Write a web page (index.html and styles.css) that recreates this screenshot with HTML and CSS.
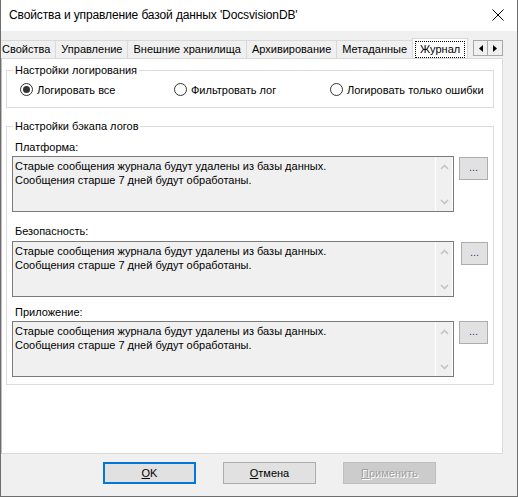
FILE: index.html
```html
<!DOCTYPE html>
<html lang="ru">
<head>
<meta charset="utf-8">
<title>Свойства и управление базой данных</title>
<link rel="stylesheet" href="styles.css">
</head>
<body>
<div class="window">
  <header class="titlebar">
    <span class="title">Свойства и управление базой данных 'DocsvisionDB'</span>
    <svg class="close" width="12" height="12" viewBox="0 0 12 12"><path d="M0.5 0.5 L11.5 11.5 M11.5 0.5 L0.5 11.5" stroke="#000" stroke-width="1" fill="none"/></svg>
  </header>
  <div class="dialog">
    <div class="tabstrip">
      <div class="tabs">
        <div class="tab">Свойства</div>
        <div class="tab">Управление</div>
        <div class="tab">Внешние хранилища</div>
        <div class="tab">Архивирование</div>
        <div class="tab">Метаданные</div>
        <div class="tab tab-active"><span class="focus">Журнал</span></div>
      </div>
      <div class="tab-scroll">
        <span class="arrow-btn"><svg width="4" height="7" viewBox="0 0 4 7"><path d="M4 0 L0 3.5 L4 7 Z" fill="#000"/></svg></span>
        <span class="arrow-btn"><svg width="4" height="7" viewBox="0 0 4 7"><path d="M0 0 L4 3.5 L0 7 Z" fill="#000"/></svg></span>
      </div>
    </div>
    <div class="panel">
      <fieldset class="group group-log">
        <legend>Настройки логирования</legend>
        <div class="radios">
          <label class="radio"><span class="radio-mark radio-checked"></span>Логировать все</label>
          <label class="radio"><span class="radio-mark"></span>Фильтровать лог</label>
          <label class="radio"><span class="radio-mark"></span>Логировать только ошибки</label>
        </div>
      </fieldset>
      <fieldset class="group group-backup">
        <legend>Настройки бэкапа логов</legend>
        <div class="field field-platform">
          <div class="field-label">Платформа:</div>
          <div class="field-row">
            <div class="memo">
              <div class="memo-text">Старые сообщения журнала будут удалены из базы данных.<br>Сообщения старше 7 дней будут обработаны.</div>
              <div class="memo-scroll">
                <svg width="9" height="6" viewBox="0 0 9 6"><path d="M1 5 L4.5 1.5 L8 5" stroke="#c4c4c4" stroke-width="1.6" fill="none"/></svg>
                <svg width="9" height="6" viewBox="0 0 9 6"><path d="M1 1 L4.5 4.5 L8 1" stroke="#c4c4c4" stroke-width="1.6" fill="none"/></svg>
              </div>
            </div>
            <button class="btn-more">...</button>
          </div>
        </div>
        <div class="field field-security">
          <div class="field-label">Безопасность:</div>
          <div class="field-row">
            <div class="memo">
              <div class="memo-text">Старые сообщения журнала будут удалены из базы данных.<br>Сообщения старше 7 дней будут обработаны.</div>
              <div class="memo-scroll">
                <svg width="9" height="6" viewBox="0 0 9 6"><path d="M1 5 L4.5 1.5 L8 5" stroke="#c4c4c4" stroke-width="1.6" fill="none"/></svg>
                <svg width="9" height="6" viewBox="0 0 9 6"><path d="M1 1 L4.5 4.5 L8 1" stroke="#c4c4c4" stroke-width="1.6" fill="none"/></svg>
              </div>
            </div>
            <button class="btn-more btn-more-wide-gap">...</button>
          </div>
        </div>
        <div class="field field-app">
          <div class="field-label">Приложение:</div>
          <div class="field-row">
            <div class="memo">
              <div class="memo-text">Старые сообщения журнала будут удалены из базы данных.<br>Сообщения старше 7 дней будут обработаны.</div>
              <div class="memo-scroll">
                <svg width="9" height="6" viewBox="0 0 9 6"><path d="M1 5 L4.5 1.5 L8 5" stroke="#c4c4c4" stroke-width="1.6" fill="none"/></svg>
                <svg width="9" height="6" viewBox="0 0 9 6"><path d="M1 1 L4.5 4.5 L8 1" stroke="#c4c4c4" stroke-width="1.6" fill="none"/></svg>
              </div>
            </div>
            <button class="btn-more btn-more-flush">...</button>
          </div>
        </div>
      </fieldset>
    </div>
    <footer class="footer">
      <button class="btn btn-default"><u>O</u>K</button>
      <button class="btn"><u>О</u>тмена</button>
      <button class="btn btn-disabled"><u>П</u>рименить</button>
    </footer>
  </div>
</div>
</body>
</html>
```
FILE: styles.css
```css
* { box-sizing: border-box; }

html, body {
  margin: 0;
  padding: 0;
  background: #ffffff;
}

body {
  font-family: "Liberation Sans", Arial, sans-serif;
  font-size: 11px;
  color: #000;
}

.window {
  width: 518px;
  height: 497px;
  display: flex;
  flex-direction: column;
  border-left: 1px solid #6e6e6e;
  border-right: 1px solid #6e6e6e;
  border-bottom: 1px solid #6e6e6e;
  background: #f0f0f0;
}

.titlebar {
  height: 31px;
  flex: none;
  display: flex;
  align-items: center;
  justify-content: space-between;
  padding: 0 13px 1px 8px;
  background: #ffffff;
}

.title {
  font-size: 12px;
  letter-spacing: -0.12px;
  color: #000;
}

.close {
  display: block;
}

.dialog {
  flex: 1;
  display: flex;
  flex-direction: column;
  background: #f0f0f0;
}

/* tabs */
.tabstrip {
  height: 27px;
  flex: none;
  display: flex;
  align-items: flex-end;
  overflow: hidden;
  padding-right: 14px;
}

.tabs {
  display: flex;
  align-items: flex-end;
  margin-left: -5px;
}

.tab {
  height: 18px;
  padding: 0 5px;
  border: 1px solid #d9d9d9;
  border-bottom: none;
  margin-right: -1px;
  line-height: 16px;
  white-space: nowrap;
  background: #f0f0f0;
}

.tab-active {
  height: 21px;
  background: #ffffff;
  margin-bottom: -1px;
  padding: 2px 2px 0 2px;
  position: relative;
  z-index: 1;
}

.focus {
  display: block;
  height: 17px;
  line-height: 15px;
  padding: 0 4px;
  border: 1px dotted #000;
}

.tab-scroll {
  margin-left: auto;
  margin-bottom: 2px;
  display: flex;
}

.arrow-btn {
  width: 15px;
  height: 16px;
  border: 1px solid #a8a8a8;
  background: #f0f0f0;
  display: flex;
  align-items: center;
  justify-content: center;
}

.arrow-btn + .arrow-btn {
  border-left: none;
  width: 15px;
}

/* panel */
.panel {
  height: 396px;
  flex: none;
  margin-right: 14px;
  background: #ffffff;
  border: 1px solid #d9d9d9;
  border-left: 1px solid #bdbdbd;
  padding: 0 8px 0 4px;
}

.group {
  margin: 0;
  min-width: 0;
  border: 1px solid #dcdcdc;
  padding: 0 5px;
}

.group legend {
  padding: 0 2px;
  margin-left: 1px;
  line-height: 14px;
}

.group-log {
  margin-top: 4px;
  padding-top: 5px;
  padding-bottom: 10px;
}

.radios {
  display: grid;
  grid-template-columns: 154px 156px auto;
  padding-left: 8px;
  height: 15px;
}

.radio {
  display: flex;
  align-items: center;
  gap: 4px;
  white-space: nowrap;
}

.radio-mark {
  width: 13px;
  height: 13px;
  border: 1px solid #333333;
  border-radius: 50%;
  background: #ffffff;
  display: flex;
  align-items: center;
  justify-content: center;
  flex: none;
}

.radio-checked::after {
  content: "";
  width: 7px;
  height: 7px;
  border-radius: 50%;
  background: #333333;
}

.group-backup {
  margin-top: 11px;
  padding-top: 7px;
  padding-bottom: 7px;
}

.field-label {
  line-height: 14px;
  height: 14px;
  padding-left: 3px;
}

.field-platform .field-row { margin-top: 2px; }
.field-security { margin-top: 12px; }
.field-security .field-row { margin-top: 3px; }
.field-app { margin-top: 8px; }
.field-app .field-row { margin-top: 2px; }

.field-row {
  display: flex;
  align-items: flex-start;
}

.memo {
  width: 442px;
  height: 56px;
  border: 1px solid #7a7a7a;
  background: #f0f0f0;
  display: flex;
  flex: none;
}

.memo-text {
  flex: 1;
  padding: 2px 2px;
  line-height: 14px;
  white-space: nowrap;
  overflow: hidden;
}

.memo-scroll {
  width: 18px;
  border-left: 1px solid #ffffff;
  border-right: 1px solid #ffffff;
  display: flex;
  flex-direction: column;
  align-items: center;
  justify-content: space-between;
  padding: 7px 0 6px;
}

.memo-scroll svg { display: block; }

.btn-more {
  width: 29px;
  height: 23px;
  margin-left: 5px;
  margin-top: 1px;
  padding: 0 0 3px;
  border: 1px solid #adadad;
  background: #e1e1e1;
  font-family: "Liberation Sans", Arial, sans-serif;
  font-size: 11px;
  color: #5a1f7a;
  line-height: 12px;
}

.btn-more-wide-gap { margin-left: 7px; }
.btn-more-flush { margin-top: 0; }

/* footer */
.footer {
  flex: 1;
  display: flex;
  gap: 27px;
  padding: 8px 0 0 102px;
}

.btn {
  width: 93px;
  height: 22px;
  border: 1px solid #adadad;
  background: #e1e1e1;
  font-family: "Liberation Sans", Arial, sans-serif;
  font-size: 11px;
  color: #000;
  padding: 0;
}

.btn u {
  text-decoration: underline;
  text-underline-offset: 1px;
}

.btn-default {
  border: 2px solid #0078d7;
}

.btn-disabled {
  background: #cccccc;
  border-color: #bfbfbf;
  color: #a0a0a0;
  text-shadow: 1px 1px 0 #ffffff;
}
```
